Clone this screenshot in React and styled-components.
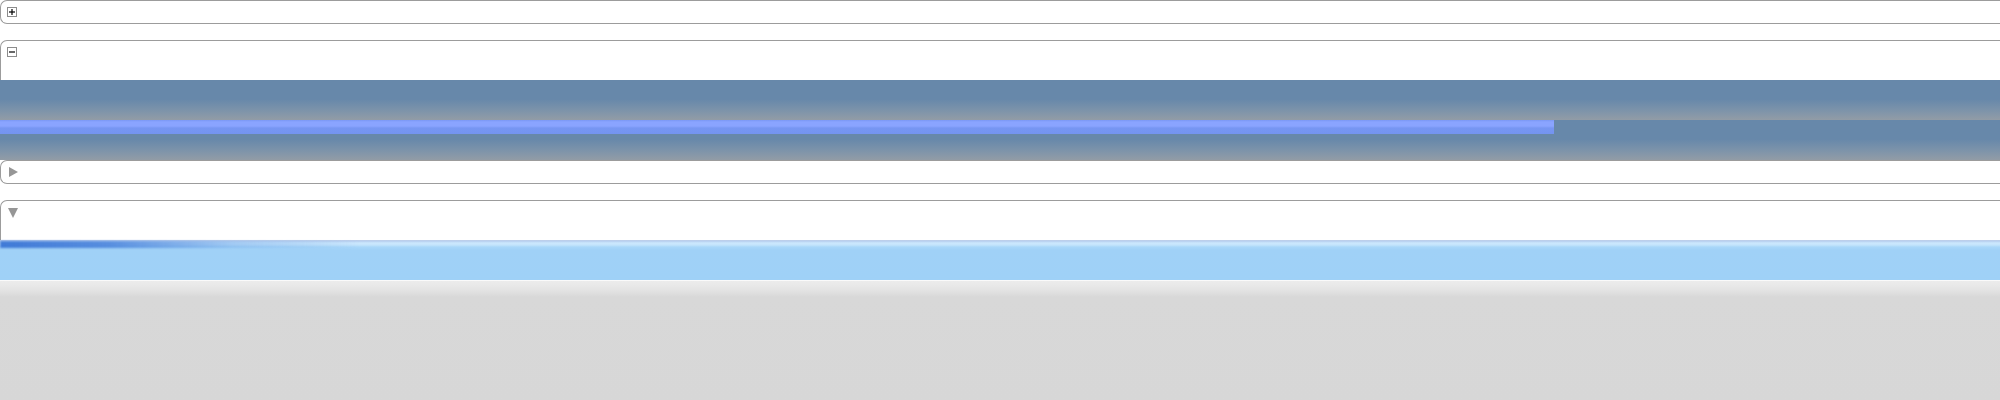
import React from "react"
import styled, { createGlobalStyle } from "styled-components"

const GlobalStyle = createGlobalStyle`
  html, body, #root {
    height: 100%;
  }
  body {
    margin: 0;
    background: #fff;
    overflow: hidden;
    font-family: "Liberation Sans", Arial, sans-serif;
  }
`

const Page = styled.div`
  display: flex;
  flex-direction: column;
  min-height: 100%;
`

const Panel = styled.section`
  display: flex;
  flex-direction: column;
  margin-bottom: ${props => (props.$open ? 0 : 16)}px;
`

const Header = styled.div`
  display: flex;
  align-items: flex-start;
  box-sizing: border-box;
  height: ${props => (props.$open ? 40 : 24)}px;
  padding: ${props => props.$pad};
  border: 1px solid #9c9c9c;
  border-right: none;
  border-bottom: ${props => (props.$open ? "none" : "1px solid #9c9c9c")};
  border-radius: ${props => (props.$open ? "7px 0 0 0" : "7px 0 0 7px")};
  background: #fff;
`

const ToggleBox = styled.svg`
  display: block;
  width: 10px;
  height: 10px;
`

const Arrow = styled.span`
  display: block;
  width: 0;
  height: 0;
  border-style: solid;
  border-color: transparent;
  ${props =>
    props.$down
      ? "border-width: 10px 5px 0 5px; border-top-color: #969696;"
      : "border-width: 5px 0 5px 9px; border-left-color: #969696;"}
`

const SlateBody = styled.div`
  display: flex;
  flex-direction: column;
`

const SlateStrip = styled.div`
  height: 40px;
  background: linear-gradient(
    180deg,
    #6788aa 0%,
    #6788aa 48%,
    #7c93aa 75%,
    #929ca6 100%
  );
`

const Meter = styled.div`
  height: 14px;
  background: linear-gradient(
    180deg,
    #7b97f4 0px,
    #8aa4ff 2px,
    #8aa4ff 6px,
    #7796f3 8px,
    #7494f0 14px
  );
`

const SkyBody = styled.div`
  position: relative;
  height: 40px;
  background: linear-gradient(
    180deg,
    #c3d1e8 0px,
    #b6cdee 1px,
    #cce8fd 3px,
    #c4e4fc 5px,
    #a9d7f9 7px,
    #a0d1f7 10px,
    #9fd1f7 100%
  );

  &::before {
    content: "";
    position: absolute;
    left: 0;
    top: 1px;
    width: 360px;
    height: 7px;
    background: linear-gradient(
      90deg,
      rgba(50, 110, 210, 0.9) 0%,
      rgba(60, 120, 215, 0.8) 30%,
      rgba(90, 150, 225, 0.35) 65%,
      rgba(120, 180, 235, 0) 100%
    );
    filter: blur(1.2px);
  }
`

const Footer = styled.footer`
  flex: 1;
  border-top: 1px solid #fafafa;
  background: linear-gradient(
    180deg,
    #ececec 0px,
    #e8e8e8 5px,
    #e2e2e2 10px,
    #d8d8d8 16px,
    #d7d7d7 100%
  );
`

const PlusIcon = ({ minus }) => (
  <ToggleBox viewBox="0 0 10 10">
    <rect x="0.5" y="0.5" width="9" height="9" fill="#fff" stroke="#8c8c8c" />
    <line x1="2" y1="5" x2="8" y2="5" stroke="#000" strokeWidth="1.2" />
    {!minus && <line x1="5" y1="2" x2="5" y2="8" stroke="#000" strokeWidth="1.2" />}
  </ToggleBox>
)

const meterWidth = 1554

const App = () => (
  <Page>
    <GlobalStyle />

    <Panel>
      <Header $pad="6px 0 0 6px">
        <PlusIcon />
      </Header>
    </Panel>

    <Panel $open>
      <Header $open $pad="6px 0 0 6px">
        <PlusIcon minus />
      </Header>
      <SlateBody>
        <SlateStrip />
        <SlateStrip>
          <Meter style={{ width: meterWidth }} />
        </SlateStrip>
      </SlateBody>
    </Panel>

    <Panel>
      <Header $pad="6px 0 0 8px">
        <Arrow />
      </Header>
    </Panel>

    <Panel $open>
      <Header $open $pad="7px 0 0 7px">
        <Arrow $down />
      </Header>
      <SkyBody />
    </Panel>

    <Footer />
  </Page>
)

export default App
